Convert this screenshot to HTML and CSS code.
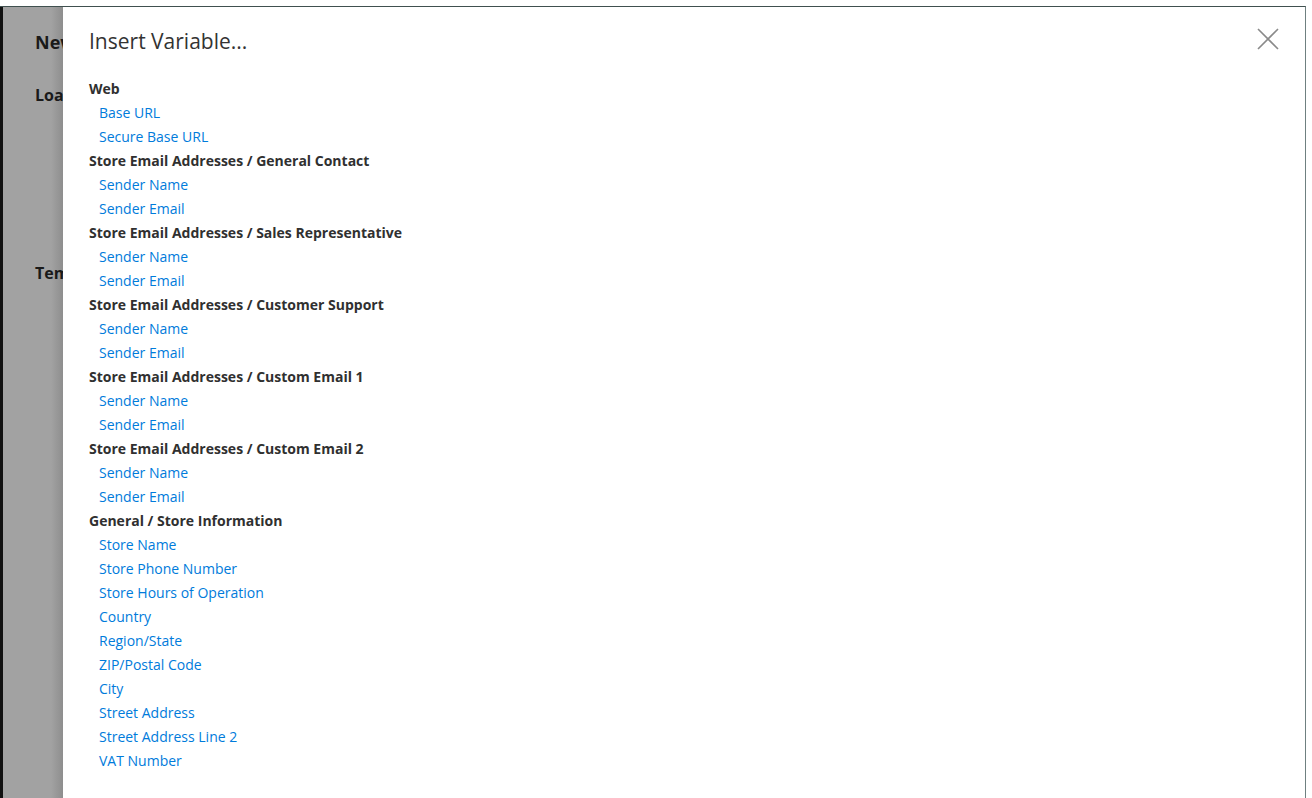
FILE: index.html
```html
<!DOCTYPE html>
<html lang="en">
<head>
    <meta charset="UTF-8">
    <title>Insert Variable</title>
    <link rel="stylesheet" href="styles.css">
</head>
<body>
    <div class="screen">
        <div class="page">
            <div class="page-title">New Template</div>
            <div class="page-label load">Load Default Template</div>
            <div class="page-label tpl">Template Information</div>
        </div>
        <div class="modal">
            <div class="modal-header">
                <h1 class="modal-title">Insert Variable...</h1>
                <button class="close-btn" aria-label="Close">
                    <svg width="22" height="22" viewBox="0 0 22 22">
                        <path d="M1 1 L21 21 M21 1 L1 21" stroke="#8a8a8a" stroke-width="1.6" fill="none"/>
                    </svg>
                </button>
            </div>
            <ul class="var-list">
                <li class="group">Web</li>
                <li><a href="#">Base URL</a></li>
                <li><a href="#">Secure Base URL</a></li>
                <li class="group">Store Email Addresses / General Contact</li>
                <li><a href="#">Sender Name</a></li>
                <li><a href="#">Sender Email</a></li>
                <li class="group">Store Email Addresses / Sales Representative</li>
                <li><a href="#">Sender Name</a></li>
                <li><a href="#">Sender Email</a></li>
                <li class="group">Store Email Addresses / Customer Support</li>
                <li><a href="#">Sender Name</a></li>
                <li><a href="#">Sender Email</a></li>
                <li class="group">Store Email Addresses / Custom Email 1</li>
                <li><a href="#">Sender Name</a></li>
                <li><a href="#">Sender Email</a></li>
                <li class="group">Store Email Addresses / Custom Email 2</li>
                <li><a href="#">Sender Name</a></li>
                <li><a href="#">Sender Email</a></li>
                <li class="group">General / Store Information</li>
                <li><a href="#">Store Name</a></li>
                <li><a href="#">Store Phone Number</a></li>
                <li><a href="#">Store Hours of Operation</a></li>
                <li><a href="#">Country</a></li>
                <li><a href="#">Region/State</a></li>
                <li><a href="#">ZIP/Postal Code</a></li>
                <li><a href="#">City</a></li>
                <li><a href="#">Street Address</a></li>
                <li><a href="#">Street Address Line 2</a></li>
                <li><a href="#">VAT Number</a></li>
            </ul>
        </div>
    </div>
</body>
</html>
```

FILE: styles.css
```css
* {
    margin: 0;
    padding: 0;
    box-sizing: border-box;
    font-family: "Open Sans", sans-serif;
}

body {
    background: white;
    height: 798px;
    overflow: hidden;
}

.screen {
    display: flex;
    margin-top: 6px;
    width: 1306px;
    height: 792px;
    border-top: 1px solid #40504f;
    border-right: 1px solid #6f8080;
}

.page {
    width: 63px;
    flex-shrink: 0;
    overflow: hidden;
    white-space: nowrap;
    border-left: 3px solid #111;
    background: linear-gradient(to right, #a2a2a2 0%, #a2a2a2 80%, #8e8e8e 100%);
    padding-left: 32px;
    color: #1a1a1a;
    font-weight: 700;
}

.page-title {
    font-size: 18px;
    margin-top: 23px;
}

.page-label {
    font-size: 16px;
}

.page-label.load {
    margin-top: 30px;
}

.page-label.tpl {
    margin-top: 156px;
}

.modal {
    flex: 1;
    background: white;
    padding: 0 26px 0 26px;
}

.modal-header {
    display: flex;
    justify-content: space-between;
    align-items: center;
    height: 70px;
}

.modal-title {
    font-size: 21px;
    font-weight: 400;
    color: #333;
    margin-top: -2px;
}

.close-btn {
    background: none;
    border: none;
    cursor: pointer;
    width: 22px;
    height: 22px;
    margin-top: -6px;
}

.var-list {
    list-style: none;
    font-size: 14px;
    line-height: 24px;
}

.var-list .group {
    font-weight: 700;
    color: #303030;
}

.var-list a {
    color: #007bdb;
    text-decoration: none;
    padding-left: 10px;
}
```
